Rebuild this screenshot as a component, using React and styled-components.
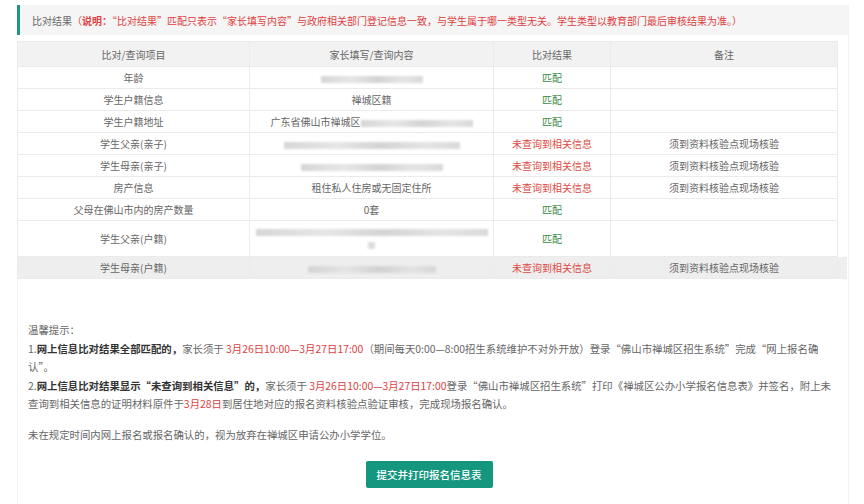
import React from 'react';
import styled, { createGlobalStyle } from 'styled-components';

const GlobalStyle = createGlobalStyle`
  html, body {
    margin: 0;
    padding: 0;
    background: #ffffff;
    font-family: "Noto Sans CJK SC", "Noto Sans", "Liberation Sans", sans-serif;
    color: #666;
  }
`;

const Page = styled.div`
  padding: 5px 15px 0 17px;
`;

const Card = styled.div`
  border-left: 1px solid #f3f3f3;
  border-right: 1px solid #f3f3f3;
  min-height: 499px;
  box-sizing: border-box;
`;

const TitleBar = styled.div`
  background: #f5f5f5;
  border-left: 3px solid #1b9783;
  height: 30px;
  display: flex;
  align-items: center;
  padding-left: 12px;
  font-size: 10px;
  color: #666;
  margin-left: -1px;
`;

const Red = styled.span`
  color: #e0403f;
  font-weight: ${p => (p.$bold ? 700 : 400)};
`;

const TableWrap = styled.div`
  margin-top: 6px;
  padding-right: 9px;
`;

const Table = styled.table`
  width: 100%;
  border-collapse: collapse;
  font-size: 10px;
  color: #666;
  margin-left: -1px;
`;

const Th = styled.th`
  background: #f2f2f2;
  font-weight: 400;
  height: 24px;
  padding: 0;
  border: 1px solid #ebebeb;
  width: ${p => p.$w};
`;

const Row = styled.tr`
  background: ${p => (p.$hover ? '#eeeeee' : '#fff')};
`;

const Td = styled.td`
  text-align: center;
  height: ${p => (p.$tall ? '35px' : '21px')};
  padding: 0;
  border: 1px solid #ebebeb;
  color: ${p => (p.$tone === 'ok' ? '#3d8c45' : p.$tone === 'bad' ? '#dd4a45' : '#666')};
  ${p => p.$extend && 'box-shadow: 9px 0 0 #eeeeee;'}
`;

const CellLines = styled.div`
  display: flex;
  flex-direction: column;
  align-items: center;
  gap: 6px;
`;

const Blur = styled.span`
  display: inline-block;
  vertical-align: middle;
  width: ${p => p.$w}px;
  height: 7px;
  background: linear-gradient(90deg, #d2d2d2, #e4e4e4 30%, #cfcfcf 55%, #e2e2e2 80%, #d6d6d6);
  filter: blur(1.3px);
  opacity: 0.9;
`;

const Notes = styled.div`
  padding: 42px 8px 0 10px;
  font-size: 10.4px;
  line-height: 18.6px;
  color: #666;
`;

const Strong = styled.b`
  color: #333;
  font-weight: 700;
`;

const Gap = styled.div`
  height: 12px;
`;

const ButtonRow = styled.div`
  display: flex;
  justify-content: center;
  padding-top: 16px;
  padding-right: 8px;
`;

const Button = styled.button`
  width: 127px;
  height: 27px;
  background: #15967f;
  color: #fff;
  border: none;
  border-radius: 2px;
  font-family: inherit;
  font-size: 10.5px;
  font-weight: 500;
  cursor: pointer;
`;

const rows = [
  { item: '年龄', content: <Blur $w={102} />, result: 'ok' },
  { item: '学生户籍信息', content: '禅城区籍', result: 'ok' },
  { item: '学生户籍地址', content: <>广东省佛山市禅城区<Blur $w={112} /></>, result: 'ok' },
  { item: '学生父亲(亲子)', content: <Blur $w={176} />, result: 'bad' },
  { item: '学生母亲(亲子)', content: <Blur $w={142} />, result: 'bad' },
  { item: '房产信息', content: '租住私人住房或无固定住所', result: 'bad' },
  { item: '父母在佛山市内的房产数量', content: '0套', result: 'ok' },
  {
    item: '学生父亲(户籍)',
    content: (
      <CellLines>
        <Blur $w={232} />
        <Blur $w={7} />
      </CellLines>
    ),
    result: 'ok',
    tall: true,
  },
  { item: '学生母亲(户籍)', content: <Blur $w={128} />, result: 'bad', hover: true },
];

export default function App() {
  return (
    <>
      <GlobalStyle />
      <Page>
        <Card>
          <TitleBar>
            比对结果
            <Red>
              （<Red $bold>说明：</Red>“比对结果”匹配只表示“家长填写内容”与政府相关部门登记信息一致，与学生属于哪一类型无关。学生类型以教育部门最后审核结果为准。）
            </Red>
          </TitleBar>

          <TableWrap>
            <Table>
              <thead>
                <tr>
                  <Th $w="231px">比对/查询项目</Th>
                  <Th $w="243px">家长填写/查询内容</Th>
                  <Th $w="116px">比对结果</Th>
                  <Th>备注</Th>
                </tr>
              </thead>
              <tbody>
                {rows.map(r => (
                  <Row key={r.item} $hover={r.hover}>
                    <Td $tall={r.tall}>{r.item}</Td>
                    <Td $tall={r.tall}>{r.content}</Td>
                    <Td $tall={r.tall} $tone={r.result}>
                      {r.result === 'ok' ? '匹配' : '未查询到相关信息'}
                    </Td>
                    <Td $tall={r.tall} $extend={r.hover}>
                      {r.result === 'bad' ? '须到资料核验点现场核验' : ''}
                    </Td>
                  </Row>
                ))}
              </tbody>
            </Table>
          </TableWrap>

          <Notes>
            <div>温馨提示：</div>
            <div>
              1.<Strong>网上信息比对结果全部匹配的，</Strong>家长须于 <Red>3月26日10:00—3月27日17:00</Red>（期间每天0:00—8:00招生系统维护不对外开放）登录“佛山市禅城区招生系统”完成“网上报名确认”。
            </div>
            <div>
              2.<Strong>网上信息比对结果显示“未查询到相关信息”的，</Strong>家长须于 <Red>3月26日10:00—3月27日17:00</Red>登录“佛山市禅城区招生系统”打印《禅城区公办小学报名信息表》并签名，附上未查询到相关信息的证明材料原件于<Red>3月28日</Red>到居住地对应的报名资料核验点验证审核，完成现场报名确认。
            </div>
            <Gap />
            <div>未在规定时间内网上报名或报名确认的，视为放弃在禅城区申请公办小学学位。</div>
          </Notes>

          <ButtonRow>
            <Button>提交并打印报名信息表</Button>
          </ButtonRow>
        </Card>
      </Page>
    </>
  );
}
